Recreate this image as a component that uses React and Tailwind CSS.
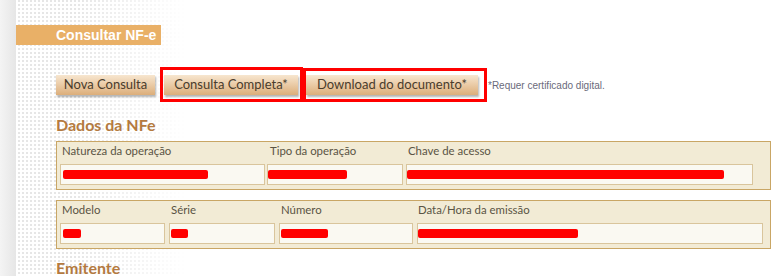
import React from "react";

const Red = ({ w, ml = 0, h = 9 }) => (
  <div
    className="bg-[#ff0000] rounded-[2px]"
    style={{ width: w, marginLeft: ml, height: h }}
  />
);

const Field = ({ label, w, red, redMl, labelMl = 2 }) => (
  <div className="flex flex-col" style={{ width: w }}>
    <div className="h-[22px] pt-[1px] text-[11.4px] leading-[16px] text-[#5a5444]" style={{ marginLeft: labelMl }}>
      {label}
    </div>
    <div className="h-[21px] bg-[#faf9f2] border border-[#d9c59c] flex items-center">
      <Red w={red} ml={redMl} />
    </div>
  </div>
);

const Btn = ({ children, w }) => (
  <div
    className="h-[20px] flex items-center justify-center text-[13px] text-[#4a3c2c] bg-gradient-to-b from-[#f7e6cf] to-[#dcae7a] shadow-[1px_2px_2px_rgba(0,0,0,0.3)]"
    style={{ width: w }}
  >
    {children}
  </div>
);

export default function App() {
  return (
    <div className="relative flex w-[781px] h-[276px] bg-white overflow-hidden font-['Lato',sans-serif]">
      <div className="w-4 shrink-0 bg-gradient-to-r from-[#f4f4f4] to-[#e6e6e6]" />
      <div className="relative flex-1">
        <div className="absolute inset-0 bg-[linear-gradient(90deg,#ffffff_50%,transparent_50%),linear-gradient(0deg,#ffffff_50%,#e6e6e6_50%)] bg-[length:4px_4px] [mask-image:linear-gradient(90deg,black_0px,black_60px,transparent_170px)]" />
        <div className="relative flex flex-col pt-[25px]">
          <div className="w-[145px] h-5 bg-[#e9b067] pl-10 text-white font-bold text-[14px] leading-5 font-['Liberation_Sans',Arial,sans-serif]">
            Consultar NF-e
          </div>

          <div className="mt-[22px] ml-10 flex items-center h-[35px]">
            <Btn w={99}>Nova Consulta</Btn>
            <div className="ml-[5px] w-[143px] h-[35px] border-[3px] border-[#ff0000] flex items-center pl-[1px]">
              <Btn w={134}>Consulta Completa*</Btn>
            </div>
            <div className="w-[184px] h-[34px] border-[3px] border-[#ff0000] flex items-center pl-0">
              <Btn w={172}>Download do documento*</Btn>
            </div>
            <div className="ml-[1px] mt-[2px] text-[10px] text-[#6a6a7a] font-['Liberation_Sans',Arial,sans-serif]">
              *Requer certificado digital.
            </div>
          </div>

          <div className="mt-[14px] ml-10 text-[16px] leading-[18px] font-bold text-[#b47a40]">
            Dados da NFe
          </div>

          <div className="mt-[7px] ml-10 w-[715px] h-[49px] border border-[#c9a665] bg-[#f2ebd5] flex pl-[3px]">
            <Field label="Natureza da operação" w={205} red={145} redMl={2} />
            <div className="w-[2px]" />
            <Field label="Tipo da operação" w={136} red={79} redMl={0} labelMl={3} />
            <div className="w-[3px]" />
            <Field label="Chave de acesso" w={347} red={317} redMl={0} />
          </div>

          <div className="mt-[10px] ml-10 w-[715px] h-[49px] border border-[#c9a665] bg-[#f2ebd5] flex pl-[3px]">
            <Field label="Modelo" w={105} red={18} redMl={2} />
            <div className="w-[4px]" />
            <Field label="Série" w={106} red={17} redMl={1} />
            <div className="w-[4px]" />
            <Field label="Número" w={134} red={47} redMl={1} />
            <div className="w-[4px]" />
            <Field label="Data/Hora da emissão" w={346} red={160} redMl={0} labelMl={1} />
          </div>

          <div className="mt-[12px] ml-10 text-[16px] leading-[14px] font-bold text-[#b47a40]">
            Emitente
          </div>
        </div>
      </div>
    </div>
  );
}
